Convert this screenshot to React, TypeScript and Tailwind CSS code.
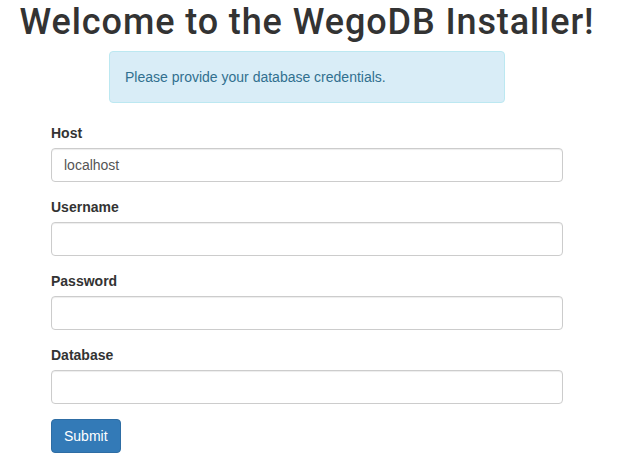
export default function App() {
  const fields = [
    { label: "Host", value: "localhost" },
    { label: "Username", value: "" },
    { label: "Password", value: "" },
    { label: "Database", value: "" },
  ];

  return (
    <div
      className="min-h-[471px] w-[614px] bg-white text-[#333]"
      style={{ fontFamily: '"Liberation Sans", Arial, sans-serif' }}
    >
      <h1
        className="pt-[2px] text-center text-[36px] font-medium leading-[40px] tracking-[0.9px] text-[#333]"
        style={{ fontFamily: 'Roboto, "Liberation Sans", sans-serif' }}
      >
        Welcome to the WegoDB Installer!
      </h1>

      <div className="mt-[9px] flex justify-center">
        <div className="w-[396px] rounded border border-[#bce8f1] bg-[#d9edf7] p-[15px] text-[14px] leading-[20px] text-[#31708f]">
          Please provide your database credentials.
        </div>
      </div>

      <form className="mx-[51px] mt-[20px] w-[512px]">
        {fields.map((f) => (
          <div key={f.label} className="mb-[15px]">
            <label className="mb-[5px] block text-[14px] font-bold leading-[20px] text-[#333]">
              {f.label}
            </label>
            <input
              type={f.label === "Password" ? "password" : "text"}
              defaultValue={f.value}
              className="block h-[34px] w-full rounded border border-[#ccc] bg-white px-3 py-[6px] text-[14px] leading-[20px] text-[#555] shadow-[inset_0_1px_1px_rgba(0,0,0,0.075)] outline-none"
            />
          </div>
        ))}
        <button
          type="button"
          className="h-[34px] rounded border border-[#2e6da4] bg-[#337ab7] px-3 text-[14px] leading-[20px] text-white"
        >
          Submit
        </button>
      </form>
    </div>
  );
}
